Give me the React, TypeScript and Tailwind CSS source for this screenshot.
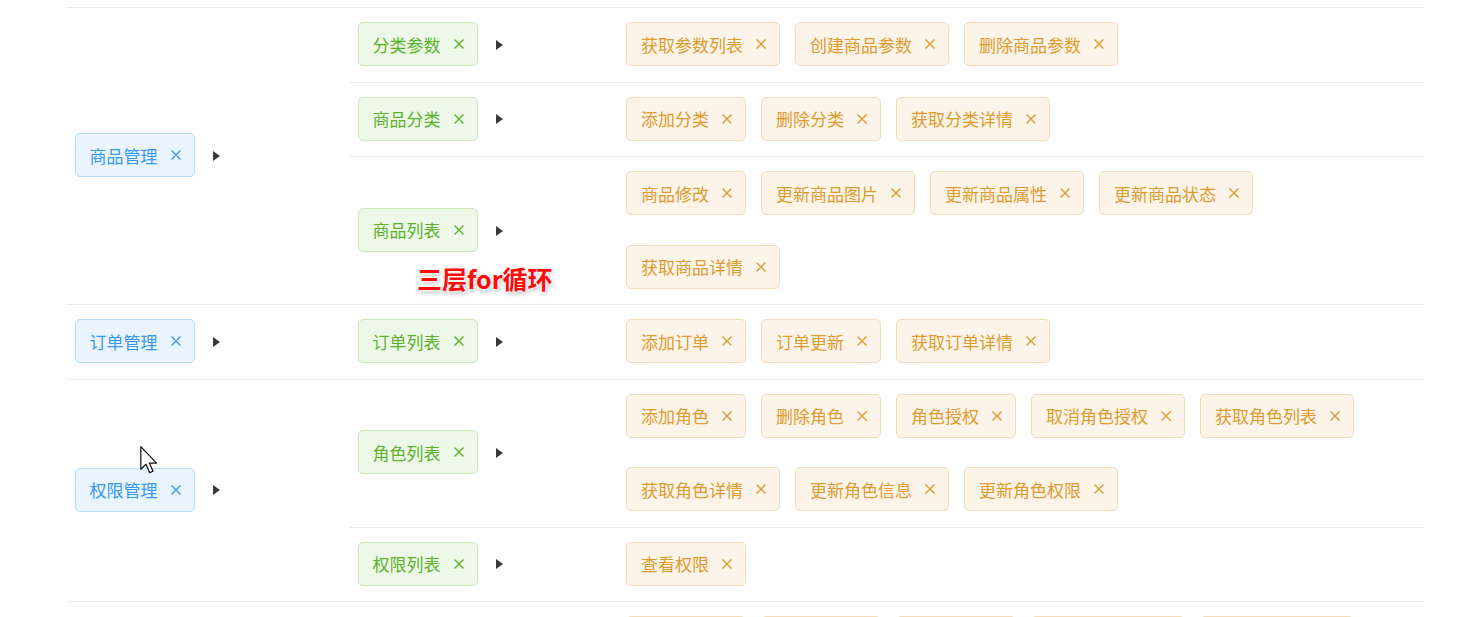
import React, { FC } from "react";

type Tone = "blue" | "green" | "orange";

type Right = {
  name: string;
  children: { name: string; children: string[] }[];
};

const rights: Right[] = [
  {
    name: "商品管理",
    children: [
      { name: "分类参数", children: ["获取参数列表", "创建商品参数", "删除商品参数"] },
      { name: "商品分类", children: ["添加分类", "删除分类", "获取分类详情"] },
      {
        name: "商品列表",
        children: ["商品修改", "更新商品图片", "更新商品属性", "更新商品状态", "获取商品详情"],
      },
    ],
  },
  {
    name: "订单管理",
    children: [{ name: "订单列表", children: ["添加订单", "订单更新", "获取订单详情"] }],
  },
  {
    name: "权限管理",
    children: [
      {
        name: "角色列表",
        children: [
          "添加角色",
          "删除角色",
          "角色授权",
          "取消角色授权",
          "获取角色列表",
          "获取角色详情",
          "更新角色信息",
          "更新角色权限",
        ],
      },
      { name: "权限列表", children: ["查看权限"] },
    ],
  },
  {
    name: "用户管理",
    children: [
      {
        name: "用户列表",
        children: [
          "添加用户",
          "删除用户",
          "更新用户",
          "获取用户列表",
          "分配用户角色",
          "获取用户详情",
          "设置管理状态",
        ],
      },
    ],
  },
];

const toneClass: Record<Tone, string> = {
  blue: "bg-[#e9f4ff] border-[#b9dcff] text-[#3a98f5]",
  green: "bg-[#eef8e8] border-[#cde8bd] text-[#5cb22c]",
  orange: "bg-[#fcf4e9] border-[#f3dcbc] text-[#de9b2e]",
};

const Tag: FC<{ label: string; tone: Tone }> = ({ label, tone }) => (
  <span
    className={`inline-flex shrink-0 items-center h-[44px] pl-[14px] pr-[12px] mx-[7.5px] mt-[14px] mb-[15.5px] border rounded-[5px] text-[17px] leading-none ${toneClass[tone]}`}
  >
    {label}
    <svg className="ml-[12px]" width="12" height="12" viewBox="0 0 12 12">
      <path d="M1.5 1.5 L10.5 10.5 M10.5 1.5 L1.5 10.5" stroke="currentColor" strokeWidth="1.4" fill="none" />
    </svg>
  </span>
);

const Caret = () => (
  <svg className="ml-[10.5px]" width="7" height="10" viewBox="0 0 7 10">
    <path d="M0 0 L7 5 L0 10 Z" fill="#3a3a3a" />
  </svg>
);

const Cursor = () => (
  <svg width="18" height="28" viewBox="0 0 13 20.5" className="absolute left-[140px] top-[446px]">
    <path
      d="M0.5 0.5 L0.5 17 L4.3 13.4 L7 19.5 L9.4 18.5 L6.8 12.5 L12 12.5 Z"
      fill="#fff"
      stroke="#111"
      strokeWidth="0.9"
      strokeLinejoin="round"
    />
  </svg>
);

export default function App() {
  return (
    <div className="relative min-h-screen overflow-hidden bg-[#fefefe] font-['Noto_Sans_CJK_SC','Noto_Sans',sans-serif]">
      <div className="ml-[67px] w-[1357px] mt-[7px] border-t border-[#e9e9e9]">
        {rights.map((l1) => (
          <div key={l1.name} className="flex border-b border-[#e9e9e9]">
            <div className="w-[283px] shrink-0 flex items-center">
              <Tag label={l1.name} tone="blue" />
              <Caret />
            </div>
            <div className="flex-1">
              {l1.children.map((l2, i) => (
                <div
                  key={l2.name}
                  className={`flex ${i > 0 ? "border-t border-[#e9e9e9]" : ""}`}
                >
                  <div className="w-[268.5px] shrink-0 flex items-center">
                    <Tag label={l2.name} tone="green" />
                    <Caret />
                  </div>
                  <div className="flex-1 flex flex-wrap content-start">
                    {l2.children.map((l3) => (
                      <Tag key={l3} label={l3} tone="orange" />
                    ))}
                  </div>
                </div>
              ))}
            </div>
          </div>
        ))}
      </div>

      <div className="absolute left-[417px] top-[266px] text-[25px] font-bold leading-none text-[#ff0a0a] [text-shadow:0_0_2px_#fff,0_0_3px_#fff,0_0_4px_#fff,1px_2px_4px_rgba(0,0,0,0.4)]">
        三层for循环
      </div>
      <Cursor />
    </div>
  );
}
